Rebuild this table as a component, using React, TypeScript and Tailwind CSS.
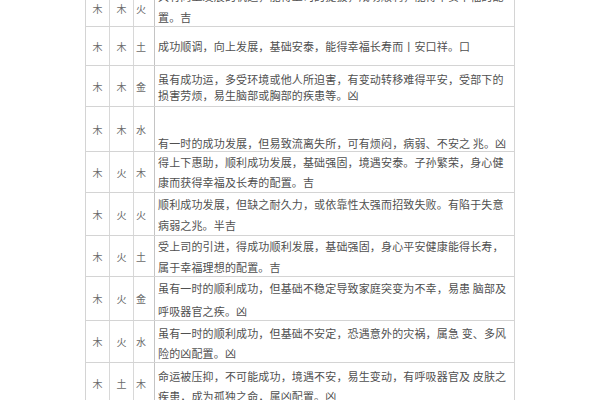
type Row = {
  a: string;
  b: string;
  c: string;
  lines: string[];
  // row height, text offset and line height, written out as full class names
  h: string;
  text: string;
  line: string;
  chars?: string;
};

const rows: Row[] = [
  {
    a: "木",
    b: "木",
    c: "火",
    lines: ["具有向上发展的机运，能得上司的提拔，成功顺利，能得平安幸福的配", "置。吉"],
    h: "h-[41px]",
    text: "pt-0",
    line: "h-[21px] leading-[21px]",
    chars: "pt-[4px]",
  },
  {
    a: "木",
    b: "木",
    c: "土",
    lines: ["成功顺调，向上发展，基础安泰，能得幸福长寿而丨安口祥。口"],
    h: "h-[39px]",
    text: "pt-[9px]",
    line: "h-[21px] leading-[21px]",
  },
  {
    a: "木",
    b: "木",
    c: "金",
    lines: ["虽有成功运，多受环境或他人所迫害，有变动转移难得平安，受部下的", "损害劳烦，易生脑部或胸部的疾患等。凶"],
    h: "h-[41px]",
    text: "pt-[5px]",
    line: "h-[16px] leading-[16px]",
  },
  {
    a: "木",
    b: "木",
    c: "水",
    lines: ["", "有一时的成功发展，但易致流离失所，可有烦闷，病弱、不安之 兆。凶"],
    h: "h-[45px]",
    text: "pt-[5px]",
    line: "h-[21px] leading-[21px]",
  },
  {
    a: "木",
    b: "火",
    c: "木",
    lines: ["得上下惠助，顺利成功发展，基础强固，境遇安泰。子孙繁荣，身心健", "康而获得幸福及长寿的配置。吉"],
    h: "h-[41px]",
    text: "pt-0",
    line: "h-[20px] leading-[20px]",
  },
  {
    a: "木",
    b: "火",
    c: "火",
    lines: ["顺利成功发展，但缺之耐久力，或依靠性太强而招致失败。有陷于失意", "病弱之兆。半吉"],
    h: "h-[43px]",
    text: "pt-[1px]",
    line: "h-[21px] leading-[21px]",
  },
  {
    a: "木",
    b: "火",
    c: "土",
    lines: ["受上司的引进，得成功顺利发展，基础强固，身心平安健康能得长寿，", "属于幸福理想的配置。吉"],
    h: "h-[41px]",
    text: "pt-0",
    line: "h-[21px] leading-[21px]",
  },
  {
    a: "木",
    b: "火",
    c: "金",
    lines: ["虽有一时的顺利成功，但基础不稳定导致家庭突变为不幸，易患 脑部及", "呼吸器官之疾。凶"],
    h: "h-[44px]",
    text: "pt-0",
    line: "h-[23px] leading-[23px]",
  },
  {
    a: "木",
    b: "火",
    c: "水",
    lines: ["虽有一时的顺利成功，但基础不安定，恐遇意外的灾祸，属急 变、多风", "险的凶配置。凶"],
    h: "h-[42px]",
    text: "pt-[2px]",
    line: "h-[20px] leading-[20px]",
  },
  {
    a: "木",
    b: "土",
    c: "木",
    lines: ["命运被压抑，不可能成功，境遇不安，易生变动，有呼吸器官及 皮肤之", "疾患，成为孤独之命，属凶配置。凶"],
    h: "h-[42px]",
    text: "pt-[3px]",
    line: "h-[20px] leading-[20px]",
  },
];

function TableRow({ row }: { row: Row }) {
  const chars = row.chars ?? "pt-0";
  return (
    <div className={`flex border-b border-[#d4d4d4] ${row.h}`}>
      <div className={`w-[24px] shrink-0 border-r border-[#d8d8d8] flex items-center justify-center text-[10px] text-[#6a6a6a] ${chars}`}>
        {row.a}
      </div>
      <div className={`w-[24px] shrink-0 border-r border-[#d8d8d8] flex items-center justify-center text-[10px] text-[#6a6a6a] ${chars}`}>
        {row.b}
      </div>
      <div className={`w-[21px] shrink-0 border-r border-[#c4c4c4] flex items-center pl-[2px] text-[10px] text-[#6a6a6a] ${chars}`}>
        {row.c}
      </div>
      <div className={`flex-1 pl-[3px] text-[11px] tracking-[0.15px] text-[#505050] ${row.text}`}>
        {row.lines.map((l, i) => (
          <div key={i} className={`whitespace-nowrap ${row.line}`}>
            {l}
          </div>
        ))}
      </div>
    </div>
  );
}

export default function App() {
  return (
    <div className="w-[600px] h-[400px] overflow-hidden bg-white font-['Noto_Sans_CJK_SC','Noto_Sans',sans-serif]">
      <div className="ml-[85px] mt-[-14px] w-[430px] border-l border-r border-[#d4d4d4]">
        {rows.map((r, i) => (
          <TableRow key={i} row={r} />
        ))}
      </div>
    </div>
  );
}
